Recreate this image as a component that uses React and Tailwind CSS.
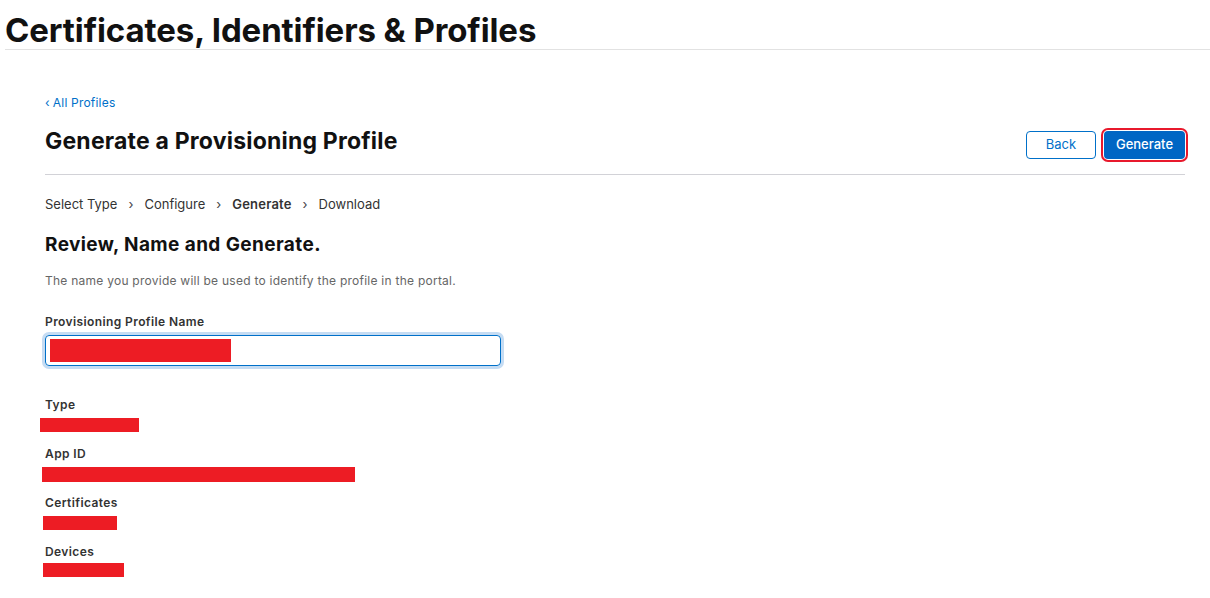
export default function App() {
  const font = { fontFamily: 'Inter, "Noto Sans", sans-serif' };
  return (
    <div className="w-[1210px] h-[598px] bg-white text-[#1d1d1f] overflow-hidden" style={font}>
      <div className="ml-[5px] border-b border-[#e2e2e2] h-[50px] flex items-end">
        <h1 className="text-[33px] font-bold leading-[40px] tracking-[-0.1px] -mb-[1px] text-[#111]">
          Certificates, Identifiers &amp; Profiles
        </h1>
      </div>
      <div className="pl-[45px] pr-[25px]">
        <div className="mt-[45px] text-[12px] leading-[16px] tracking-[0.2px] text-[#0070c9]">
          <span className="mr-[3px]">‹</span>All Profiles
        </div>
        <div className="flex items-center justify-between border-b border-[#d2d2d7] h-[63px] mt-[1px]">
          <h2 className="text-[23px] font-bold leading-[28px] text-[#111] tracking-[0.2px] -mt-[5px]">
            Generate a Provisioning Profile
          </h2>
          <div className="flex items-center gap-[8px] mt-[4px]">
            <button className="h-[28px] w-[70px] rounded-[4px] border border-[#0070c9] text-[#0070c9] text-[13px] bg-white">
              Back
            </button>
            <button className="h-[28px] w-[81px] rounded-[4px] bg-[#0066c4] text-white text-[13px] font-medium outline-2 outline-offset-1 outline-[#e8192c]">
              Generate
            </button>
          </div>
        </div>
        <div className="flex items-center mt-[20px] text-[13px] leading-[18px] text-[#333]">
          <span>Select Type</span>
          <span className="mx-[11px] text-[#444]">›</span>
          <span>Configure</span>
          <span className="mx-[11px] text-[#444]">›</span>
          <span className="font-semibold tracking-[0.2px]">Generate</span>
          <span className="mx-[11px] text-[#444]">›</span>
          <span>Download</span>
        </div>
        <h3 className="mt-[20px] text-[19px] font-bold leading-[24px] tracking-[0.4px] text-[#111]">Review, Name and Generate.</h3>
        <p className="mt-[16px] text-[12px] leading-[16px] tracking-[0.25px] text-[#666]">
          The name you provide will be used to identify the profile in the portal.
        </p>
        <div className="mt-[25px] text-[12px] font-semibold leading-[16px] tracking-[0.4px] text-[#333]">Provisioning Profile Name</div>
        <div className="mt-[5px] w-[456px] h-[31px] rounded-[4px] border border-[#0070c9] ring-[3px] ring-[#c5dcf3] flex items-center pl-[4px]">
          <div className="w-[181px] h-[23px] bg-[#ed1c24]" />
        </div>
        <div className="mt-[31px] text-[12px] font-semibold leading-[16px] tracking-[0.4px] text-[#333]">Type</div>
        <div className="mt-[5px] -ml-[5px] w-[99px] h-[14px] bg-[#ed1c24]" />
        <div className="mt-[14px] text-[12px] font-semibold leading-[16px] tracking-[0.4px] text-[#333]">App ID</div>
        <div className="mt-[5px] -ml-[3px] w-[313px] h-[15px] bg-[#ed1c24]" />
        <div className="mt-[13px] text-[12px] font-semibold leading-[16px] tracking-[0.4px] text-[#333]">Certificates</div>
        <div className="mt-[5px] -ml-[2px] w-[74px] h-[14px] bg-[#ed1c24]" />
        <div className="mt-[14px] text-[12px] font-semibold leading-[16px] tracking-[0.4px] text-[#333]">Devices</div>
        <div className="mt-[3px] -ml-[2px] w-[81px] h-[14px] bg-[#ed1c24]" />
      </div>
    </div>
  );
}
